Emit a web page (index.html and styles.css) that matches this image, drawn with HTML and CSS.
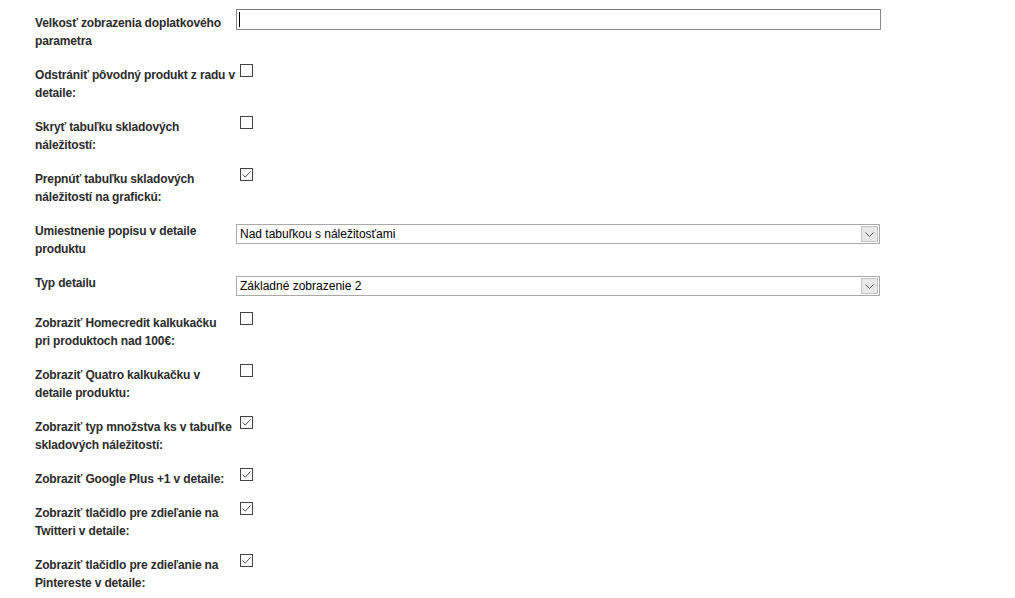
FILE: index.html
```html
<!DOCTYPE html>
<html lang="sk">
<head>
<meta charset="utf-8">
<title>Nastavenia detailu produktu</title>
<link rel="stylesheet" href="styles.css">
</head>
<body>
<div class="form">
  <div class="row">
    <div class="label">Velkosť zobrazenia doplatkového parametra</div>
    <div class="field"><div class="textbox"><span class="caret"></span></div></div>
  </div>
  <div class="row">
    <div class="label">Odstrániť pôvodný produkt z radu v detaile:</div>
    <div class="field"><span class="cb"></span></div>
  </div>
  <div class="row">
    <div class="label">Skryť tabuľku skladových náležitostí:</div>
    <div class="field"><span class="cb"></span></div>
  </div>
  <div class="row">
    <div class="label">Prepnúť tabuľku skladových náležitostí na grafickú:</div>
    <div class="field"><span class="cb"><svg viewBox="0 0 11 11" width="11" height="11"><polyline points="1.5,5.5 4.2,8.2 9.5,2.5" /></svg></span></div>
  </div>
  <div class="row">
    <div class="label">Umiestnenie popisu v detaile produktu</div>
    <div class="field"><div class="select"><span class="sel-text">Nad tabuľkou s náležitosťami</span><span class="sel-btn"><svg viewBox="0 0 9 5" width="9" height="5"><polyline points="0.5,0.5 4.5,4.5 8.5,0.5" /></svg></span></div></div>
  </div>
  <div class="row">
    <div class="label">Typ detailu</div>
    <div class="field"><div class="select"><span class="sel-text">Základné zobrazenie 2</span><span class="sel-btn"><svg viewBox="0 0 9 5" width="9" height="5"><polyline points="0.5,0.5 4.5,4.5 8.5,0.5" /></svg></span></div></div>
  </div>
  <div class="row">
    <div class="label">Zobraziť Homecredit kalkukačku pri&nbsp;produktoch nad 100€:</div>
    <div class="field"><span class="cb"></span></div>
  </div>
  <div class="row">
    <div class="label">Zobraziť Quatro kalkukačku v detaile produktu:</div>
    <div class="field"><span class="cb"></span></div>
  </div>
  <div class="row">
    <div class="label">Zobraziť typ množstva ks v tabuľke skladových náležitostí:</div>
    <div class="field"><span class="cb"><svg viewBox="0 0 11 11" width="11" height="11"><polyline points="1.5,5.5 4.2,8.2 9.5,2.5" /></svg></span></div>
  </div>
  <div class="row">
    <div class="label">Zobraziť Google Plus +1 v detaile:</div>
    <div class="field"><span class="cb"><svg viewBox="0 0 11 11" width="11" height="11"><polyline points="1.5,5.5 4.2,8.2 9.5,2.5" /></svg></span></div>
  </div>
  <div class="row">
    <div class="label">Zobraziť tlačidlo pre zdieľanie na Twitteri v detaile:</div>
    <div class="field"><span class="cb"><svg viewBox="0 0 11 11" width="11" height="11"><polyline points="1.5,5.5 4.2,8.2 9.5,2.5" /></svg></span></div>
  </div>
  <div class="row">
    <div class="label">Zobraziť tlačidlo pre zdieľanie na Pintereste v detaile:</div>
    <div class="field"><span class="cb"><svg viewBox="0 0 11 11" width="11" height="11"><polyline points="1.5,5.5 4.2,8.2 9.5,2.5" /></svg></span></div>
  </div>
</div>
</body>
</html>
```
FILE: styles.css
```css
html, body {
  margin: 0;
  padding: 0;
  background: #ffffff;
}
body {
  font-family: "Liberation Sans", Arial, sans-serif;
  font-size: 12px;
  color: #333333;
}
.form {
  padding: 9px 0 0 35px;
  display: flex;
  flex-direction: column;
  gap: 11px;
}
.row {
  display: grid;
  grid-template-columns: 201px 645px;
  align-items: start;
}
.label {
  font-weight: bold;
  line-height: 18px;
  padding-top: 5px;
  margin-right: -4px;
  letter-spacing: -0.15px;
  color: #2b2b2b;
}
.field {
  display: flex;
  align-items: flex-start;
}
.textbox {
  box-sizing: border-box;
  width: 645px;
  height: 21px;
  border: 1px solid #8a8a8a;
  border-top-color: #7a7a7a;
  background: #fff;
  display: flex;
  align-items: center;
  padding-left: 2px;
}
.caret {
  display: block;
  width: 1px;
  height: 15px;
  background: #000;
}
.cb {
  box-sizing: border-box;
  display: flex;
  align-items: center;
  justify-content: center;
  width: 13px;
  height: 13px;
  margin: 3px 0 3px 4px;
  border: 1px solid #444;
  background: #fff;
}
.cb svg {
  display: block;
}
.cb polyline {
  fill: none;
  stroke: #555;
  stroke-width: 1;
}
.select {
  box-sizing: border-box;
  width: 644px;
  height: 20px;
  margin: 7px 0 2px 0;
  border: 1px solid #a9a9a9;
  background: #fff;
  display: flex;
  align-items: center;
  justify-content: space-between;
}
.sel-text {
  padding-left: 3px;
  color: #000;
  font-size: 12px;
  font-weight: normal;
}
.sel-btn {
  box-sizing: border-box;
  width: 17px;
  height: 16px;
  margin-right: 1px;
  background: #e8e8e8;
  border: 1px solid #c4c4c4;
  display: flex;
  align-items: center;
  justify-content: center;
}
.sel-btn svg {
  display: block;
}
.sel-btn polyline {
  fill: none;
  stroke: #555;
  stroke-width: 1;
}
```
